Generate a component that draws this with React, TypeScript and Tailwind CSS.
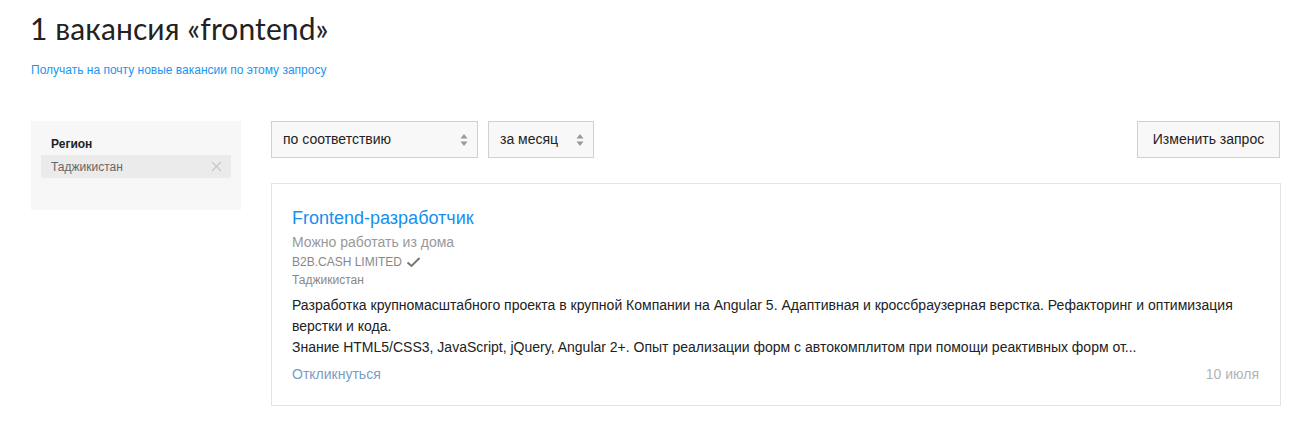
import React from "react";

const Arrows = () => (
  <svg width="8" height="14" viewBox="0 0 8 14" className="shrink-0">
    <path d="M4 1 L7.5 5.5 L0.5 5.5 Z" fill="#999" />
    <path d="M4 13 L7.5 8.5 L0.5 8.5 Z" fill="#999" />
  </svg>
);

export default function App() {
  const arial = { fontFamily: '"Liberation Sans", Arial, sans-serif' };
  return (
    <div className="w-[1304px] h-[424px] bg-white text-[#333]" style={arial}>
      <div className="pl-[30px] pt-[9px]">
        <h1 className="text-[30px] leading-[38px] text-[#222] tracking-[0.1px]" style={{ fontFamily: "Lato, sans-serif" }}>
          1 вакансия «frontend»
        </h1>
        <div className="mt-[15px] pl-px text-[12px] leading-[16px] text-[#1a95f2]">
          Получать на почту новые вакансии по этому запросу
        </div>
      </div>
      <div className="flex mt-[43px] pl-[31px]">
        <div className="w-[210px] h-[89px] bg-[#f7f7f7] pt-[15px] px-[10px] self-start">
          <div className="pl-[10px] text-[12px] font-bold text-[#222] leading-[16px]">Регион</div>
          <div className="mt-[3px] h-[23px] bg-[#ebebeb] flex items-center justify-between pl-[10px] pr-[9px] text-[12px] text-[#666]">
            <span>Таджикистан</span>
            <svg width="11" height="11" viewBox="0 0 11 11">
              <path d="M1 1 L10 10 M10 1 L1 10" stroke="#c8c8c8" strokeWidth="1.3" />
            </svg>
          </div>
        </div>
        <div className="ml-[30px] w-[1010px]">
          <div className="flex items-start">
            <div className="w-[207px] h-[37px] border border-[#cdd1d5] bg-[#f8f8f8] flex items-center justify-between pl-[11px] pr-[9px] text-[14px] text-[#222]">
              <span>по соответствию</span>
              <Arrows />
            </div>
            <div className="ml-[10px] w-[106px] h-[37px] border border-[#cdd1d5] bg-[#f8f8f8] flex items-center justify-between pl-[11px] pr-[9px] text-[14px] text-[#222]">
              <span>за месяц</span>
              <Arrows />
            </div>
            <div className="ml-auto mr-[1px] w-[143px] h-[37px] border border-[#cdd1d5] bg-[#f8f8f8] flex items-center justify-center text-[14px] text-[#222]">
              Изменить запрос
            </div>
          </div>
          <div className="mt-[25px] border border-[#e4e4e4] pl-[20px] pr-[21px] pt-[23px] pb-[22px]">
            <div className="text-[18px] leading-[22px] text-[#168ff0]">Frontend-разработчик</div>
            <div className="mt-[4px] text-[14px] leading-[18px] text-[#999]">Можно работать из дома</div>
            <div className="mt-[3px] text-[12px] leading-[16px] text-[#888] flex items-center">
              B2B.CASH LIMITED
              <svg width="15" height="12" viewBox="0 0 15 12" className="ml-[4px]">
                <path d="M1.5 6.5 L5.5 10 L13.5 2" stroke="#777" strokeWidth="2" fill="none" />
              </svg>
            </div>
            <div className="mt-[2px] text-[12px] leading-[16px] text-[#888]">Таджикистан</div>
            <div className="mt-[7px] text-[14px] leading-[21px] text-[#222]">
              Разработка крупномасштабного проекта в крупной Компании на Angular 5. Адаптивная и кроссбраузерная верстка. Рефакторинг и оптимизация верстки и кода.
              <br />
              Знание HTML5/CSS3, JavaScript, jQuery, Angular 2+. Опыт реализации форм с автокомплитом при помощи реактивных форм от...
            </div>
            <div className="mt-[7px] flex justify-between text-[14px] leading-[18px]">
              <span className="text-[#7a9dc6]">Откликнуться</span>
              <span className="text-[#b3b3b3]">10 июля</span>
            </div>
          </div>
        </div>
      </div>
    </div>
  );
}
